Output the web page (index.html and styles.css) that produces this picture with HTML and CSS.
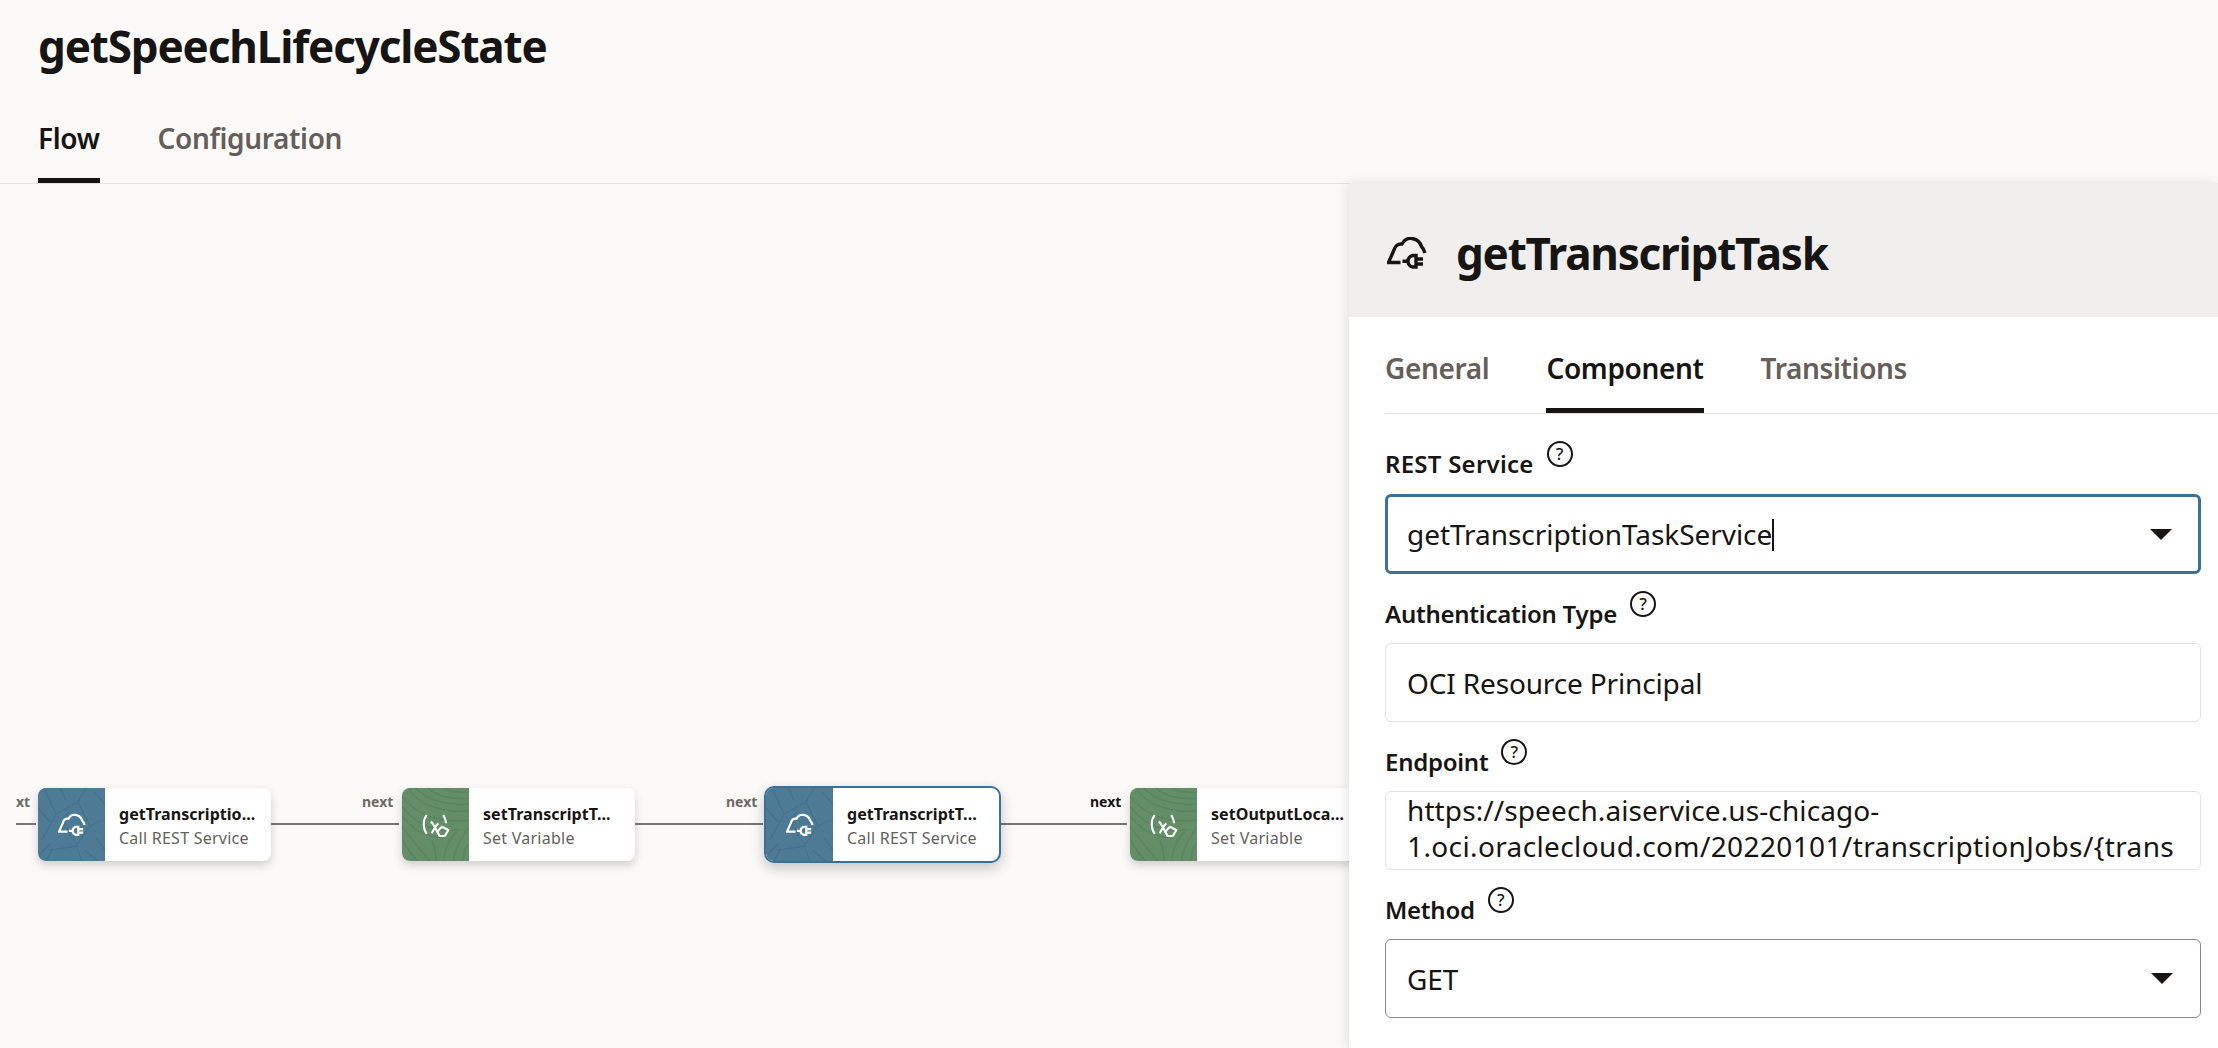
FILE: index.html
```html
<!DOCTYPE html>
<html lang="en">
<head>
<meta charset="utf-8">
<title>getSpeechLifecycleState</title>
<link rel="stylesheet" href="styles.css">
</head>
<body>
<svg class="defs" width="0" height="0" aria-hidden="true">
  <symbol id="cloud" viewBox="0 0 40 32">
    <path d="M13.500 25.500H1.500L7 13C8 9 11 6.500 15 7C17.500 2.500 21 1 25 1.500C29 2 33 5 34.500 9.500C36 11 37 13 38 16" fill="none"/>
    <path d="M15.500 24.300H20.500M29 18.500H26A5.800 5.800 0 0 0 26 30H29ZM29 22H36M29 27H36" fill="none"/>
  </symbol>
  <symbol id="variable" viewBox="0 0 26 26">
    <path d="M3.700 3C-0.300 8.500 -0.300 16 3.700 22M7.700 9.700C11 12 12.500 17 15.300 21.300M15.300 11.300C12.500 14 10.500 18 8.700 21.300M20.300 3C22 6 23 8.500 23 11.300" fill="none"/>
    <path d="M18.700 14.700L25.300 18L22 23.700L16.500 24L14.300 19.700Z" fill="none"/>
  </symbol>
  <symbol id="tex-blue" viewBox="0 0 67 73" preserveAspectRatio="none">
    <path d="M6 0L18 26L4 52M18 26L40 14L48 0M40 14L52 38L67 30M52 38L38 58L44 73M38 58L14 62L8 73M0 20L12 34M26 36L34 50M56 4L67 16M58 50L67 62M22 0L28 12M46 62L60 73M2 66L12 56M30 24L24 42" fill="none" stroke="#46718b" stroke-width="1.300"/>
  </symbol>
  <symbol id="tex-green" viewBox="0 0 67 73" preserveAspectRatio="none">
    <path d="M6 0C16 18 44 25 67 23M14 0C24 12 46 18 67 16M26 0C34 8 50 12 67 10M42 0C48 3 58 5 67 4M0 8C14 28 42 36 67 32M0 18C12 36 32 44 56 42M0 28C10 42 24 48 40 50M0 38C8 50 16 60 28 73M0 50C4 60 8 66 16 73M54 44C46 54 42 62 42 73M66 40C58 52 52 62 52 73M30 52C32 58 34 66 34 73M67 56C63 60 61 66 61 73" fill="none" stroke="#5a8560" stroke-width="1.500"/>
  </symbol>
</svg>

<header class="page-head">
  <h1 class="page-title">getSpeechLifecycleState</h1>
  <nav class="tabs page-tabs">
    <span class="tab tab-on">Flow</span>
    <span class="tab">Configuration</span>
  </nav>
</header>

<main class="workspace">
  <section class="canvas">
    <div class="edge edge-0"></div>
    <div class="edge edge-1"></div>
    <div class="edge edge-2"></div>
    <div class="edge edge-3"></div>
    <span class="edge-label label-0">xt</span>
    <span class="edge-label label-1">next</span>
    <span class="edge-label label-2">next</span>
    <span class="edge-label label-3 label-dark">next</span>

    <article class="node node-1">
      <div class="node-art art-blue">
        <svg class="tex"><use href="#tex-blue"/></svg>
        <svg class="art-icon"><use href="#cloud"/></svg>
      </div>
      <div class="node-text"><b>getTranscriptio...</b><span>Call REST Service</span></div>
    </article>
    <article class="node node-2">
      <div class="node-art art-green">
        <svg class="tex"><use href="#tex-green"/></svg>
        <svg class="art-icon"><use href="#variable"/></svg>
      </div>
      <div class="node-text"><b>setTranscriptT...</b><span>Set Variable</span></div>
    </article>
    <article class="node node-3 node-selected">
      <div class="node-art art-blue">
        <svg class="tex"><use href="#tex-blue"/></svg>
        <svg class="art-icon"><use href="#cloud"/></svg>
      </div>
      <div class="node-text"><b>getTranscriptT...</b><span>Call REST Service</span></div>
    </article>
    <article class="node node-4">
      <div class="node-art art-green">
        <svg class="tex"><use href="#tex-green"/></svg>
        <svg class="art-icon"><use href="#variable"/></svg>
      </div>
      <div class="node-text"><b>setOutputLoca...</b><span>Set Variable</span></div>
    </article>
  </section>

  <aside class="panel">
    <div class="panel-head">
      <svg class="panel-icon"><use href="#cloud"/></svg>
      <h2 class="panel-title">getTranscriptTask</h2>
    </div>
    <div class="panel-body">
      <nav class="tabs panel-tabs">
        <span class="tab">General</span>
        <span class="tab tab-on">Component</span>
        <span class="tab">Transitions</span>
      </nav>
      <div class="group group-first">
        <div class="label-row"><label class="label">REST Service</label><span class="help">?</span></div>
        <div class="field field-focus"><span class="value">getTranscriptionTaskService<i class="cursor"></i></span><i class="caret"></i></div>
      </div>
      <div class="group">
        <div class="label-row"><label class="label">Authentication Type</label><span class="help">?</span></div>
        <div class="field field-readonly"><span class="value">OCI Resource Principal</span></div>
      </div>
      <div class="group">
        <div class="label-row"><label class="label">Endpoint</label><span class="help">?</span></div>
        <div class="field field-readonly field-multi"><span class="value-multi">https://speech.aiservice.us-chicago-<br><span class="value-line2">1.oci.oraclecloud.com/20220101/transcriptionJobs/{trans</span></span></div>
      </div>
      <div class="group">
        <div class="label-row"><label class="label">Method</label><span class="help">?</span></div>
        <div class="field field-select"><span class="value">GET</span><i class="caret"></i></div>
      </div>
    </div>
  </aside>
</main>
</body>
</html>
```

FILE: styles.css
```css
* { box-sizing: border-box; }
html, body { margin: 0; height: 100%; }
body {
  width: 2218px;
  height: 1048px;
  overflow: hidden;
  display: flex;
  flex-direction: column;
  background: #fbfaf8;
  color: #161513;
  font-family: "Noto Sans", "Liberation Sans", sans-serif;
}
.defs { position: absolute; }

.page-head { border-bottom: 1px solid #e4e2df; height: 184px; padding: 18px 0 0 38px; flex: none; }
.page-title { margin: 0; font-size: 44px; line-height: 56px; font-weight: 700; letter-spacing: -1.15px; }

.tabs { display: flex; }
.tab {
  font-size: 28px;
  line-height: 38px;
  font-weight: 600;
  color: #655f5c;
  letter-spacing: -.35px;
  padding-bottom: 22px;
  border-bottom: 5px solid transparent;
  white-space: nowrap;
}
.tab-on { color: #161513; border-bottom-color: #161513; }
.page-tabs { gap: 58px; margin-top: 45px; }
.page-tabs .tab { padding-bottom: 21px; }

.workspace { flex: 1; display: flex; min-height: 0; }
.canvas { flex: 1; position: relative; overflow: hidden; }

.edge { position: absolute; top: 639px; height: 2px; background: #7a7570; }
.edge-0 { left: 16px; width: 20px; }
.edge-1 { left: 271px; width: 128px; }
.edge-2 { left: 635px; width: 128px; }
.edge-3 { left: 1001px; width: 126px; }

.edge-label { position: absolute; top: 608px; font-size: 14px; line-height: 20px; font-weight: 700; color: #6f6a66; }
.label-0 { left: 16px; }
.label-1 { left: 362px; }
.label-2 { left: 726px; }
.label-3 { left: 1090px; }
.label-dark { color: #161513; }

.node {
  position: absolute;
  top: 604px;
  width: 233px;
  height: 73px;
  display: flex;
  background: #fff;
  border-radius: 8px;
  overflow: hidden;
  box-shadow: 0 4px 10px rgba(0, 0, 0, .18);
}
.node-1 { left: 38px; }
.node-2 { left: 402px; }
.node-3 { left: 764px; }
.node-4 { left: 1130px; }
.node-selected {
  top: 602px;
  width: 237px;
  height: 77px;
  border: 2px solid #3a7196;
  border-radius: 10px;
  box-shadow: 0 5px 14px rgba(0, 0, 0, .22);
}
.node-art { width: 67px; flex: none; position: relative; display: flex; align-items: center; justify-content: center; }
.art-blue { background: #4d7a94; }
.art-green { background: #648e68; }
.tex { position: absolute; inset: 0; width: 100%; height: 100%; }
.art-icon { position: relative; width: 28px; height: 26px; stroke: #fff; stroke-width: 3.100; }
.art-green .art-icon { stroke-width: 2.100; }

.node-text { display: flex; flex-direction: column; padding: 13px 0 0 14px; min-width: 0; white-space: nowrap; }
.node-text b { font-size: 16px; line-height: 26px; font-weight: 700; letter-spacing: .05px; }
.node-text span { font-size: 16px; line-height: 23px; color: #655f5c; letter-spacing: .25px; }

.panel {
  width: 869px;
  flex: none;
  position: relative;
  z-index: 1;
  background: #fff;
  box-shadow: -2px 0 12px rgba(0, 0, 0, .1);
  margin-top: -1px;
}
.panel-head { height: 134px; background: #f0efed; display: flex; align-items: center; padding: 5px 0 0 38px; gap: 29px; }
.panel-icon { width: 40px; height: 32px; stroke: #161513; stroke-width: 3.400; flex: none; }
.panel-title { margin: 0; font-size: 44px; line-height: 56px; font-weight: 700; letter-spacing: -1.2px; }

.panel-body { padding: 0 0 0 36px; }
.panel-tabs { gap: 57px; padding-top: 32px; border-bottom: 1px solid #e4e2df; height: 97px; }
.group { width: 816px; }
.label-row { height: 69px; display: flex; align-items: flex-end; gap: 13px; padding-bottom: 13px; }
.group-first .label-row { height: 80px; padding-bottom: 14px; }
.label { font-size: 24px; line-height: 32px; font-weight: 600; letter-spacing: -.25px; }
.group-first .label { letter-spacing: .25px; }
.help {
  width: 26px;
  height: 26px;
  margin-bottom: 13px;
  border: 2px solid #161513;
  border-radius: 50%;
  font-size: 17px;
  line-height: 22px;
  font-weight: 500;
  text-align: center;
}
.field {
  height: 79px;
  border: 1px solid #e4e2df;
  border-radius: 6px;
  display: flex;
  align-items: center;
  justify-content: space-between;
  padding: 0 21px;
  font-size: 28px;
  letter-spacing: -.15px;
  overflow: hidden;
}
.field-focus { height: 80px; border: 3px solid #3a7196; padding: 0 20px 0 19px; letter-spacing: -.05px; }
.field-select { border-color: #8a8886; }
.field-multi { align-items: flex-start; }
.value { white-space: nowrap; }
.value-multi { display: block; white-space: nowrap; line-height: 36px; letter-spacing: .1px; }
.value-line2 { letter-spacing: .38px; }
.cursor { display: inline-block; width: 1.500px; height: 32px; background: #161513; vertical-align: -6px; }
.caret { width: 0; height: 0; border-left: 11px solid transparent; border-right: 11px solid transparent; border-top: 11px solid #161513; margin-right: 6px; flex: none; }
```
